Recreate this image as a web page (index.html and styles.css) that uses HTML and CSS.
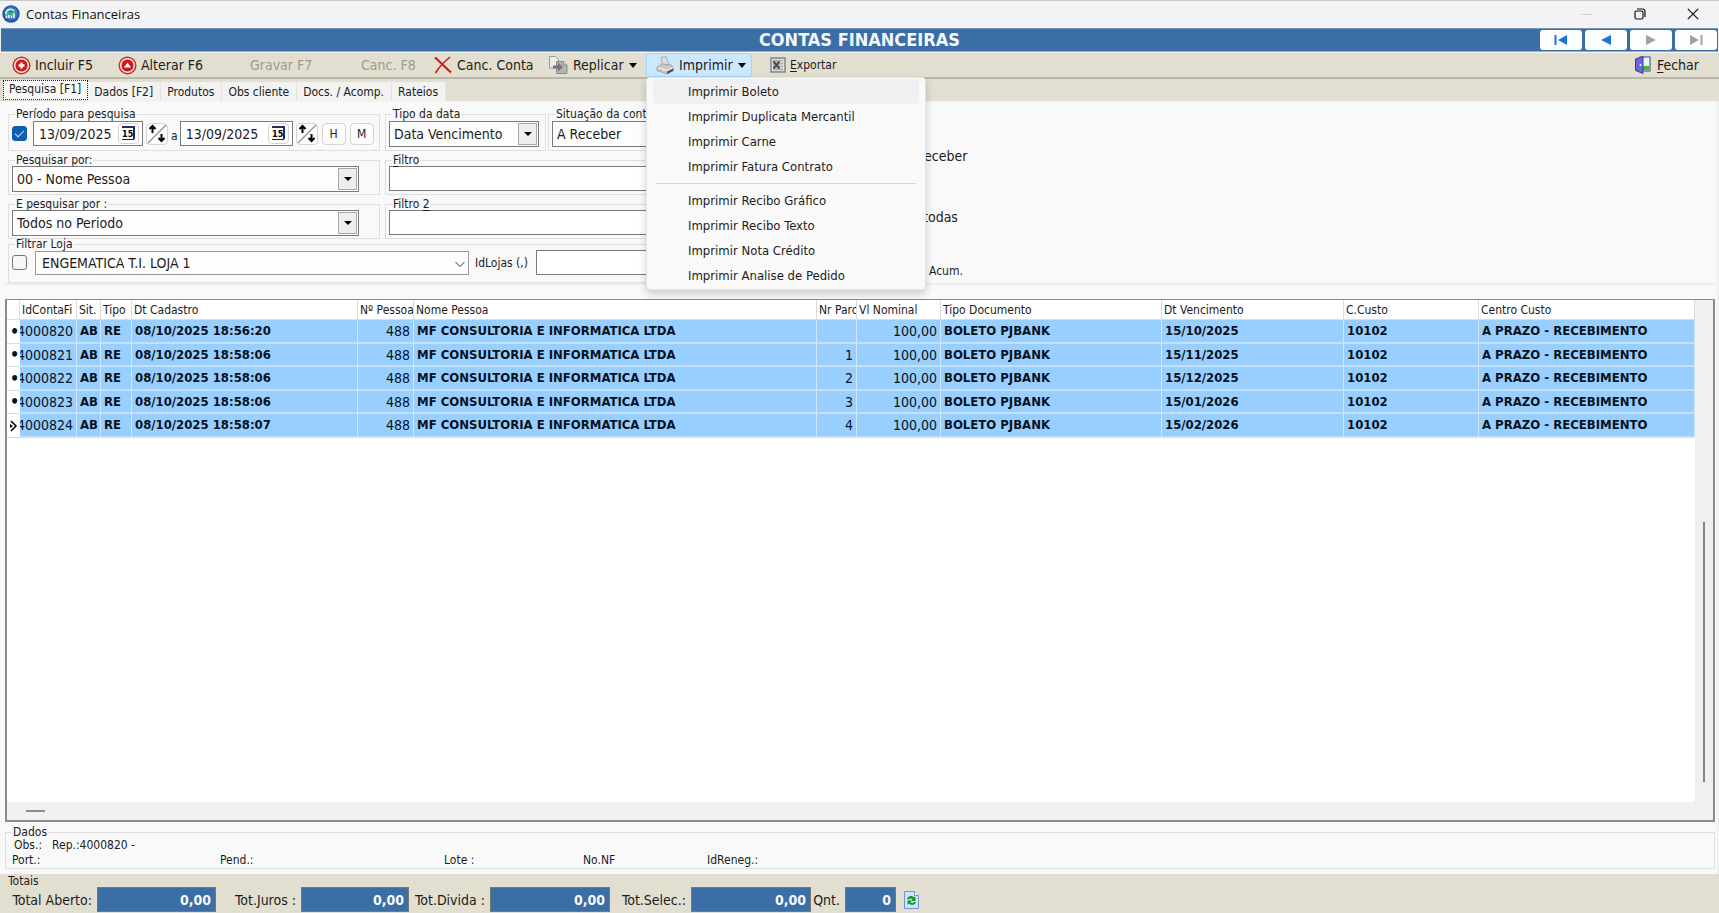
FILE: index.html
```html
<!DOCTYPE html>
<html lang="pt-BR">
<head>
<meta charset="utf-8">
<title>Contas Financeiras</title>
<link rel="stylesheet" href="styles.css">
</head>
<body>
<header class="titlebar">
  <svg class="app-icon" viewBox="0 0 18 18" width="18" height="18"><circle cx="9" cy="9" r="8.7" fill="#2456a5"/><circle cx="9" cy="8.500" r="6.800" fill="#3c78c8"/><path d="M4 9a4.500 4.500 0 0 1 8-3" fill="none" stroke="#dff0ff" stroke-width="1.600"/><path d="M4.500 13V9.500M7 13v-3M9.500 13V9M12 13V8" stroke="#fff" stroke-width="1.500"/><path d="M4 10.500l3-2.500 2 2 4.500-5" fill="none" stroke="#35c759" stroke-width="1.600"/></svg>
  <span class="window-name">Contas Financeiras</span>
  <div class="window-buttons">
    <button aria-label="Minimizar" disabled><svg width="12" height="12"><path d="M0 6.500h11" stroke="#d4d4d6"/></svg></button>
    <button aria-label="Restaurar"><svg width="12" height="12" fill="none" stroke="#111" stroke-width="1.200"><rect x="1" y="3" width="8" height="8" rx="1.500"/><path d="M3 1h5.500a2.500 2.500 0 0 1 2.500 2.500V9"/></svg></button>
    <button aria-label="Fechar janela"><svg width="12" height="12"><path d="M.8.8l10.400 10.400M11.200.8L.8 11.200" stroke="#111" stroke-width="1.200"/></svg></button>
  </div>
</header>

<div class="banner">
  <h1>CONTAS FINANCEIRAS</h1>
  <nav class="record-nav">
    <button aria-label="Primeiro"><svg width="14" height="12"><path d="M1.500 1v10" stroke="#1874d8" stroke-width="2"/><path d="M13 1v10L4 6z" fill="#1874d8"/></svg></button>
    <button aria-label="Anterior"><svg width="14" height="12"><path d="M12 1v10L2 6z" fill="#1874d8"/></svg></button>
    <button aria-label="Próximo" disabled><svg width="14" height="12"><path d="M2 1v10l10-5z" fill="#a2a2a2"/></svg></button>
    <button aria-label="Último" disabled><svg width="14" height="12"><path d="M1 1v10l9-5z" fill="#a2a2a2"/><path d="M12.500 1v10" stroke="#a2a2a2" stroke-width="2"/></svg></button>
  </nav>
</div>

<div class="toolbar">
  <button class="tool t-new"><svg width="19" height="19" viewBox="0 0 19 19"><circle cx="9.500" cy="9.500" r="9" fill="#c92a2a"/><circle cx="9.500" cy="9.500" r="7.600" fill="#f4e4e0"/><circle cx="9.500" cy="9.500" r="6" fill="#d01616"/><path d="M9.500 6.500v6M6.500 9.500h6" stroke="#fff" stroke-width="2.400"/></svg>Incluir F5</button>
  <button class="tool t-edit"><svg width="19" height="19" viewBox="0 0 19 19"><circle cx="9.500" cy="9.500" r="9" fill="#c92a2a"/><circle cx="9.500" cy="9.500" r="7.600" fill="#f4e4e0"/><circle cx="9.500" cy="9.500" r="6" fill="#d01616"/><path d="M5.800 11.500h7.400L9.500 6.500z" fill="#fff"/></svg>Alterar F6</button>
  <button class="tool t-save" disabled>Gravar F7</button>
  <button class="tool t-cancel" disabled>Canc. F8</button>
  <button class="tool t-void"><svg width="18" height="18"><path d="M1 1.500C6 6 11 11 17 16.500" stroke="#d81818" stroke-width="2.200" fill="none"/><path d="M16 1C10 6 5 11 1.500 17" stroke="#d81818" stroke-width="1.600" fill="none"/></svg>Canc. Conta</button>
  <button class="tool t-copy"><svg width="19" height="18"><path d="M.5.500h6l3 3v8.500H.5z" fill="#ececec" stroke="#999"/><path d="M7.500 5.500h7l3.500 3.500v8.500H7.500z" fill="#b4b4b4" stroke="#8a8a8a"/><path d="M14.500 5.500V9h3.500" fill="#e4e4e4" stroke="#8a8a8a"/><path d="M4 9.500h5V6.500l5 4.500-5 4.500v-3H4z" fill="#757575"/></svg>Replicar<i class="caret"></i></button>
  <div class="print">
    <button class="tool print-button" aria-haspopup="menu" aria-expanded="true"><svg width="18" height="19"><path d="M5 1.500l5-1 3 9-6 1.500z" fill="#dedede" stroke="#aaa"/><path d="M1 11l5-3 9 1 2.500 2.500v3L11 18 1 14.500z" fill="#c8c8c8" stroke="#a2a2a2"/><path d="M2 11.500l9 3 6-3" stroke="#fafafa" fill="none"/><path d="M11 15.500l6-3v2.500l-6 3z" fill="#555"/></svg>Imprimir<i class="caret"></i></button>
    <div class="menu" role="menu">
      <button role="menuitem" class="current">Imprimir Boleto</button>
      <button role="menuitem">Imprimir Duplicata Mercantil</button>
      <button role="menuitem">Imprimir Carne</button>
      <button role="menuitem">Imprimir Fatura Contrato</button>
      <hr>
      <button role="menuitem">Imprimir Recibo Gráfico</button>
      <button role="menuitem">Imprimir Recibo Texto</button>
      <button role="menuitem">Imprimir Nota Crédito</button>
      <button role="menuitem">Imprimir Analise de Pedido</button>
    </div>
  </div>
  <button class="tool small"><svg width="16" height="16"><rect x="1" y="1" width="14" height="14" fill="#dcdcdc" stroke="#858585" stroke-width="1.500"/><path d="M3 3h10v10H3z" fill="#ababab"/><path d="M10 5h3M10 8h3M10 11h3" stroke="#fff"/><path d="M3.500 4.500l6 7M9.500 4.500l-6 7" stroke="#444" stroke-width="1.800"/></svg><span><u>E</u>xportar</span></button>
  <button class="tool t-close"><svg width="16" height="18"><rect x="5" y="1" width="10" height="14" fill="#e8f4ff" stroke="#3a3a9a"/><path d="M8 10h6v4H8z" fill="#3fbf1e"/><path d="M.5 3L8 .5v17l-7.500-3z" fill="#6a66dc" stroke="#3a38a0"/><circle cx="5.500" cy="9" r="1" fill="#fff"/></svg><span><u>F</u>echar</span></button>
</div>

<nav class="tabs">
  <button class="active">Pesquisa [F1]</button><button>Dados [F2]</button><button>Produtos</button><button>Obs cliente</button><button>Docs. / Acomp.</button><button>Rateios</button>
</nav>

<main class="page">
  <section class="search">
    <div class="filters">
      <fieldset class="first">
        <legend>Período para pesquisa</legend>
        <div class="line period">
          <input type="checkbox" checked aria-label="Período para pesquisa">
          <div class="date"><input type="text" value="13/09/2025" aria-label="Data inicial"><button aria-label="Calendário inicial"><svg width="15" height="15"><path d="M1 1h12v12" fill="none" stroke="#28285a" stroke-width="2"/><path d="M1 13.500h12" stroke="#222"/><text x="1" y="11" class="cal">15</text></svg></button></div>
          <button class="swap" aria-label="Mudar data inicial"><svg width="20" height="20"><path d="M1 19L19 1" stroke="#999" stroke-width="1.400"/><path d="M5.500 9V3M2.500 5l3-3 3 3" fill="none" stroke="#000" stroke-width="2"/><path d="M14.500 10v6M11.500 14l3 3 3-3" fill="none" stroke="#000" stroke-width="2"/></svg></button>
          <span class="until">a</span>
          <div class="date"><input type="text" value="13/09/2025" aria-label="Data final"><button aria-label="Calendário final"><svg width="15" height="15"><path d="M1 1h12v12" fill="none" stroke="#28285a" stroke-width="2"/><path d="M1 13.500h12" stroke="#222"/><text x="1" y="11" class="cal">15</text></svg></button></div>
          <button class="swap" aria-label="Mudar data final"><svg width="20" height="20"><path d="M1 19L19 1" stroke="#999" stroke-width="1.400"/><path d="M5.500 9V3M2.500 5l3-3 3 3" fill="none" stroke="#000" stroke-width="2"/><path d="M14.500 10v6M11.500 14l3 3 3-3" fill="none" stroke="#000" stroke-width="2"/></svg></button>
          <button class="key">H</button>
          <button class="key">M</button>
        </div>
      </fieldset>
      <div class="pair">
        <fieldset class="first date-kind">
          <legend><label for="kind">Tipo da data</label></legend>
          <div class="select"><select id="kind"><option>Data Vencimento</option></select><span class="drop"></span></div>
        </fieldset>
        <fieldset class="first state">
          <legend><label for="state">Situação da conta</label></legend>
          <div class="select"><select id="state"><option>A Receber</option></select><span class="drop"></span></div>
        </fieldset>
      </div>
      <fieldset>
        <legend><label for="by">Pesquisar por:</label></legend>
        <div class="select by"><select id="by"><option>00 - Nome Pessoa</option></select><span class="drop"></span></div>
      </fieldset>
      <fieldset class="text-filter">
        <legend><label for="f1"><u>F</u>iltro</label></legend>
        <input id="f1" class="box" type="text">
      </fieldset>
      <fieldset>
        <legend><label for="and">E pesquisar por :</label></legend>
        <div class="select by"><select id="and"><option>Todos no Periodo</option></select><span class="drop"></span></div>
      </fieldset>
      <fieldset class="text-filter">
        <legend><label for="f2">Filtro <u>2</u></label></legend>
        <input id="f2" class="box" type="text">
      </fieldset>
      <fieldset class="store">
        <legend>Filtrar Loja</legend>
        <div class="line">
          <input type="checkbox" aria-label="Filtrar Loja">
          <div class="select flat"><select aria-label="Loja"><option>ENGEMATICA T.I. LOJA 1</option></select><svg width="12" height="12"><path d="M1.500 4L6 8.500 10.500 4" fill="none" stroke="#888" stroke-width="1.200"/></svg></div>
          <label for="ids">IdLojas (,)</label>
          <input id="ids" class="box" type="text">
        </div>
      </fieldset>
    </div>
    <div class="options">
      <span>Receber</span>
      <span>todas</span>
      <span class="minor">Acum.</span>
    </div>
  </section>

  <section class="results">
    <div class="grid">
      <div class="sheet">
        <table>
          <colgroup><col class="c-mark"><col class="c-id"><col class="c-sit"><col class="c-type"><col class="c-made"><col class="c-num"><col class="c-name"><col class="c-part"><col class="c-value"><col class="c-doc"><col class="c-due"><col class="c-code"><col></colgroup>
          <thead><tr><th></th><th>IdContaFi</th><th>Sit.</th><th>Tipo</th><th>Dt Cadastro</th><th>Nº Pessoa</th><th>Nome Pessoa</th><th>Nr Parc</th><th>Vl Nominal</th><th>Tipo Documento</th><th>Dt Vencimento</th><th>C.Custo</th><th>Centro Custo</th></tr></thead>
          <tbody>
            <tr><td class="mark">•</td><td class="n"><div>4000820</div></td><td>AB</td><td>RE</td><td>08/10/2025 18:56:20</td><td class="n">488</td><td>MF CONSULTORIA E INFORMATICA LTDA</td><td class="n"></td><td class="n">100,00</td><td>BOLETO PJBANK</td><td>15/10/2025</td><td>10102</td><td>A PRAZO - RECEBIMENTO</td></tr>
            <tr><td class="mark">•</td><td class="n"><div>4000821</div></td><td>AB</td><td>RE</td><td>08/10/2025 18:58:06</td><td class="n">488</td><td>MF CONSULTORIA E INFORMATICA LTDA</td><td class="n">1</td><td class="n">100,00</td><td>BOLETO PJBANK</td><td>15/11/2025</td><td>10102</td><td>A PRAZO - RECEBIMENTO</td></tr>
            <tr><td class="mark">•</td><td class="n"><div>4000822</div></td><td>AB</td><td>RE</td><td>08/10/2025 18:58:06</td><td class="n">488</td><td>MF CONSULTORIA E INFORMATICA LTDA</td><td class="n">2</td><td class="n">100,00</td><td>BOLETO PJBANK</td><td>15/12/2025</td><td>10102</td><td>A PRAZO - RECEBIMENTO</td></tr>
            <tr><td class="mark">•</td><td class="n"><div>4000823</div></td><td>AB</td><td>RE</td><td>08/10/2025 18:58:06</td><td class="n">488</td><td>MF CONSULTORIA E INFORMATICA LTDA</td><td class="n">3</td><td class="n">100,00</td><td>BOLETO PJBANK</td><td>15/01/2026</td><td>10102</td><td>A PRAZO - RECEBIMENTO</td></tr>
            <tr><td class="mark"><svg width="8" height="12"><path d="M1 1l5 5-5 5" fill="none" stroke="#000" stroke-width="1.500"/><path d="M0 4l3 2-3 2z" fill="#000"/></svg></td><td class="n"><div>4000824</div></td><td>AB</td><td>RE</td><td>08/10/2025 18:58:07</td><td class="n">488</td><td>MF CONSULTORIA E INFORMATICA LTDA</td><td class="n">4</td><td class="n">100,00</td><td>BOLETO PJBANK</td><td>15/02/2026</td><td>10102</td><td>A PRAZO - RECEBIMENTO</td></tr>
          </tbody>
        </table>
      </div>
      <div class="vscroll"><div class="thumb"></div></div>
      <div class="hscroll"><div class="thumb"></div></div>
    </div>
  </section>

  <fieldset class="details">
    <legend>Dados</legend>
    <div class="note"><span>Obs.:</span><span>Rep.:4000820 -</span></div>
    <div class="facts"><span>Port.:</span><span>Pend.:</span><span>Lote :</span><span>No.NF</span><span>IdReneg.:</span></div>
  </fieldset>
</main>

<footer class="totals">
  <h2>Totais</h2>
  <div class="sums">
    <label for="open">Total Aberto:</label><input id="open" value="0,00" readonly>
    <label for="interest">Tot.Juros :</label><input id="interest" value="0,00" readonly>
    <label for="debt">Tot.Divida :</label><input id="debt" value="0,00" readonly>
    <label for="picked">Tot.Selec.:</label><input id="picked" value="0,00" readonly>
    <label for="count">Qnt.</label><input id="count" value="0" readonly>
    <button aria-label="Atualizar totais"><svg width="15" height="18"><path d="M.5.500h10l4 4v13H.5z" fill="#cfe2fa" stroke="#6c98cc"/><path d="M10.500.500v4h4" fill="#fff" stroke="#6c98cc"/><path d="M3 8c1-3 5-4 7-1.500l1.500-1v4.500H7l1.500-1.500C7.500 7 6 7 5 8.500zM12 11c-1 3-5 4-7 1.500l-1.500 1V9.500H8L6.500 11c1 1.500 2.500 1.500 3.500 0z" fill="#15961e"/></svg></button>
  </div>
</footer>
</body>
</html>
```
FILE: styles.css
```css
* { box-sizing: border-box; }

body {
  margin: 0;
  min-height: 100vh;
  display: flex;
  flex-direction: column;
  background: #f0f0f0;
  color: #1c1c1c;
  font-family: "DejaVu Sans Condensed", "Noto Sans", sans-serif;
  font-size: 12px;
  line-height: 16px;
}

button, input, select {
  font: inherit;
  color: inherit;
  margin: 0;
  padding: 0;
}

button { border: 0; background: none; white-space: nowrap; }
svg { display: block; flex: none; }
fieldset { min-width: 0; margin: 0; padding: 0 3px; border: 1px solid #dfdfdf; }
legend { margin-left: 3px; padding: 0 1px; line-height: 12px; height: 12px; white-space: nowrap; }
u { text-underline-offset: 2px; }

.titlebar {
  display: flex;
  align-items: center;
  height: 28px;
  padding: 0 0 2px 2px;
  border-top: 1px solid #c9c8c6;
  background: #f3f3f6;
}
.window-name { margin-left: 6px; font-family: "Open Sans", "Noto Sans", sans-serif; font-size: 13px; color: #111; }
.window-buttons { margin-left: auto; display: flex; }
.window-buttons button { width: 53px; height: 24px; display: grid; place-items: center; }

.banner {
  display: grid;
  grid-template-columns: 1fr auto 1fr;
  align-items: center;
  height: 24px;
  margin: 0 1px;
  background: #3a6ea5;
  border-top: 1px solid #7097bf;
  border-bottom: 1px solid #8fafcd;
}
.banner h1 { grid-column: 2; margin: 0; font-size: 18px; line-height: 20px; color: #f4f8fc; }
.record-nav { justify-self: end; display: flex; gap: 3px; padding-right: 1px; }
.record-nav button { width: 42px; height: 20px; border-radius: 3px; background: #fdfdfd; display: grid; place-items: center; }

.toolbar {
  display: flex;
  align-items: center;
  height: 27px;
  padding: 0 20px 0 12px;
  background: #e2dfd0;
  border-top: 1px solid #f5f5f0;
  border-bottom: 2px solid #b9b7aa;
  font-size: 14px;
}
.tool { display: flex; align-items: center; gap: 4px; height: 24px; }
.tool:disabled { color: #9c9a91; }
.tool.small { font-size: 12px; margin-left: 18px; }
.t-new { width: 106px; }
.t-edit { width: 132px; }
.t-save { width: 111px; }
.t-cancel { width: 73px; }
.t-void { width: 115px; gap: 5px; }
.t-copy { width: 97px; gap: 5px; }
.t-close { margin-left: auto; gap: 6px; }
.caret { border: 4px solid transparent; border-top: 5px solid #000; border-bottom: 0; }

.print { position: relative; }
.print-button { width: 106px; padding-left: 9px; gap: 5px; background: #cce8ff; border: 1px solid #a5d5fb; border-radius: 3px; }
.menu {
  position: absolute;
  z-index: 2;
  top: 24px;
  left: 0;
  width: 280px;
  padding: 1px 6px;
  border: 1px solid #e4e4e4;
  border-radius: 4px;
  background: #f9f9f9;
  box-shadow: 0 4px 8px rgba(0, 0, 0, 0.18);
}
.menu button { display: block; width: 100%; height: 25px; padding-left: 35px; text-align: left; font-size: 13px; border-radius: 4px; }
.menu .current { background: #f0f0f0; }
.menu hr { height: 1px; margin: 4px 3px; border: 0; background: #d6d6d6; }

.tabs { display: flex; align-items: flex-end; height: 22px; padding-left: 3px; background: #e2dfd0; }
.tabs button { height: 19px; padding: 0 7px 0 6px; background: #f2f2f1; border-right: 1px solid #e2e2e0; }
.tabs .active { height: 20px; margin-bottom: 1px; padding: 0 6px 4px 5px; background: #f9f9f9; border: 1px dotted #222; }

.page { flex: 1; display: flex; flex-direction: column; margin-right: 2px; padding: 0 2px 5px 5px; background: #f9f9f9; border-top: 1px solid #f2f2f2; }

.search { display: flex; padding: 6px 0 0 3px; height: 181px; }
.filters { display: grid; grid-template-columns: 372px 1fr; grid-template-rows: 43px 41px 41px 41px; gap: 3px 5px; width: 890px; flex: none; }
.first { padding-top: 1px; }
.pair { display: flex; gap: 2px; }
.date-kind { width: 161px; }
.state { flex: 1; }
.by { width: 347px; }
.text-filter .box { width: 100%; display: block; }
.store { grid-column: 1 / -1; margin-top: -4px; }
.line { display: flex; align-items: center; }
.line input[type="checkbox"] {
  appearance: none;
  flex: none;
  width: 15px;
  height: 15px;
  border: 1px solid #777;
  border-radius: 3px;
  background: #f7f7f7;
}
.line input[type="checkbox"]:checked { border-color: #0a5fb4; background: #0a5fb4; display: grid; place-items: center; }
.line input[type="checkbox"]:checked::after { content: ""; width: 8px; height: 4px; margin-top: -2px; border: solid #cfe3f5; border-width: 0 0 1px 1px; rotate: -45deg; }
.date { display: flex; align-items: center; width: 113px; height: 25px; border: 1px solid #7a7a7a; background: #fff; padding-right: 3px; font-size: 14px; }
.date input { flex: 1; min-width: 0; width: 0; padding-left: 5px; border: 0; background: none; outline: 0; }
.date button, .key, .swap { height: 22px; display: grid; place-items: center; border: 1px solid #d4d4d4; border-radius: 4px; background: #fdfdfd; }
.date button { width: 21px; height: 21px; }
.cal { font-size: 9px; font-weight: bold; }
.period { gap: 3px; }
.period .date { margin-left: 3px; width: 110px; }
.until { margin: 4px -1px 0 0; }
.period .until + .date { margin-left: 0; width: 113px; }
.swap { width: 22px; }
.key { width: 24px; margin-left: 1px; }

.select { position: relative; height: 26px; }
.select select { appearance: none; width: 100%; height: 100%; padding-left: 4px; border: 1px solid #7a7a7a; border-radius: 0; background: #fdfdfd; font-size: 14px; outline: 0; }
.drop { position: absolute; top: 2px; right: 2px; bottom: 2px; width: 19px; display: grid; place-items: center; background: #eee; border: 1px solid #a8a8a8; pointer-events: none; }
.drop::after { content: ""; border: 4px solid transparent; border-top-color: #000; border-bottom: 0; }
.date-kind .select { width: 150px; }
.flat { width: 434px; height: 24px; margin: 0 6px 0 8px; }
.flat select { padding-left: 6px; border-color: #999; }
.flat svg { position: absolute; right: 3px; top: 7px; pointer-events: none; }
.box { height: 25px; border: 1px solid #7a7a7a; background: #fff; outline: 0; }
.store .box { flex: 1; margin-left: 8px; }

.options { display: flex; flex-direction: column; margin-left: 18px; font-size: 14px; }
.options span { padding-top: 40px; height: 56px; }
.options span + span { height: 61px; padding: 45px 0 0 7px; }
.options .minor { padding: 38px 0 0 13px; font-size: 12px; }

.results { flex: 1; display: flex; padding-top: 14px; border-top: 2px solid #ececec; }
.grid { flex: 1; display: grid; grid-template: 1fr 18px / 1fr 18px; border: 2px solid #8a8a8a; border-width: 1px 2px 2px; background: #f0f0f0; }
.sheet { overflow: hidden; background: #fff; border-radius: 0 0 3px; }
table { width: 100%; table-layout: fixed; border-collapse: separate; border-spacing: 0; }
.c-mark { width: 13px; }
.c-id { width: 57px; }
.c-sit { width: 24px; }
.c-type { width: 31px; }
.c-made { width: 226px; }
.c-num { width: 56px; }
.c-name { width: 403px; }
.c-part { width: 40px; }
.c-value { width: 84px; }
.c-doc { width: 221px; }
.c-due { width: 182px; }
.c-code { width: 135px; }
th, td { padding: 0; overflow: hidden; white-space: nowrap; text-align: left; line-height: 16px; }
th { height: 20px; padding-left: 2px; font-weight: normal; border-right: 1px solid #ddd; border-bottom: 1px solid #ddd; }
td { height: 24px; padding-left: 3px; font-size: 13px; font-weight: bold; color: #06121f; background: #99cfff; border-right: 1px solid #d3e6f7; border-bottom: 2px solid #c3e1fb; }
tbody tr:nth-child(even) td { height: 23px; }
.n { padding: 0 3px 0 0; font-size: 14px; font-weight: normal; text-align: right; }
.n div { display: flex; justify-content: flex-end; }
tbody .mark { padding: 0 0 0 3px; font-size: 16px; background: #fff; border-right: 0; border-bottom: 1px solid #ddd; }
.vscroll { display: flex; flex-direction: column; justify-content: flex-end; align-items: center; padding-bottom: 20px; }
.vscroll .thumb { width: 2px; height: 54%; background: #858585; }
.hscroll { display: flex; align-items: center; padding-left: 19px; }
.hscroll .thumb { width: 19px; height: 2px; background: #8c8c8c; }

.details { margin-top: 4px; padding: 0 6px 1px; height: 43px; }
.details legend { margin-left: 0; }
.note { display: flex; gap: 10px; padding-left: 2px; line-height: 14px; }
.facts { display: grid; grid-template-columns: 208px 224px 139px 124px 1fr; line-height: 16px; }

.totals { height: 39px; padding: 2px 8px 0; background: #e2dfd0; }
.totals h2 { margin: 0; font-size: 12px; font-weight: normal; line-height: 11px; }
.sums { display: grid; grid-template-columns: 89px 119px 85px 108px 81px 120px 81px 120px 34px 51px auto; justify-content: start; align-items: center; font-size: 14px; }
.sums label { white-space: nowrap; text-align: right; padding-right: 5px; }
.sums input { width: 100%; height: 25px; padding-right: 4px; border: 1px solid #777; background: #3a6ea5; color: #f4f8fc; font-weight: bold; text-align: right; outline: 0; }
.sums button { padding-left: 8px; }
```
